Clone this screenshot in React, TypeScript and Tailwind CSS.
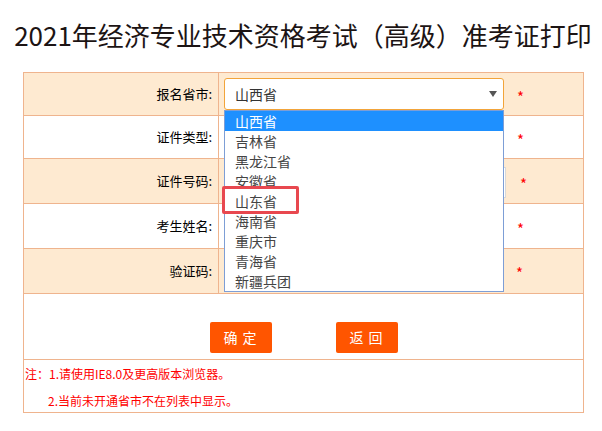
import * as React from "react";

const provinces = [
  "山西省",
  "吉林省",
  "黑龙江省",
  "安徽省",
  "山东省",
  "海南省",
  "重庆市",
  "青海省",
  "新疆兵团",
];

const font = { fontFamily: '"Noto Sans CJK SC", "Noto Sans", sans-serif' };

function Star({ className = "" }: { className?: string }) {
  return <span className={`text-[15px] text-[#ff0000] ${className}`}>*</span>;
}

function Row({
  label,
  shaded,
  height,
  children,
}: {
  label: string;
  shaded?: boolean;
  height: string;
  children?: React.ReactNode;
}) {
  return (
    <div
      className={`grid grid-cols-[195px_1fr] border-b border-[#efb48e] ${height} ${
        shaded ? "bg-[#feead1]" : "bg-white"
      }`}
    >
      <div className="flex items-center justify-end border-r border-[#efb48e] pr-[6px] text-[13px] text-black">
        {label}
      </div>
      <div className="flex items-center pl-[5px]">{children}</div>
    </div>
  );
}

export default function App() {
  return (
    <div className="h-[431px] w-[602px] bg-white" style={font}>
      {/* title */}
      <div className="flex h-[72px] items-center justify-center pb-[4px] pl-[4px] text-[26px] text-[#1c1414]">
        2021年经济专业技术资格考试（高级）准考证打印
      </div>

      <div className="ml-[23px] w-[561px] border border-[#efb48e]">
        {/* 报名省市 with open dropdown */}
        <div className="relative z-20">
          <Row label="报名省市:" shaded height="h-[43px]">
            <div className="relative h-[32px] w-[280px]">
              <div className="flex h-full items-center justify-between rounded-[3px] border border-[#f2a43a] bg-white pl-[10px] pr-[6px] text-[14px] text-[#333]">
                <span>山西省</span>
                <span className="h-0 w-0 border-x-[4px] border-t-[6px] border-x-transparent border-t-[#555]" />
              </div>
              <div className="absolute left-0 top-[32px] h-[182px] w-[280px] border border-[#7d9ed6] bg-white">
                {provinces.map((p, i) => (
                  <div
                    key={p}
                    className={`flex h-[20px] items-center pl-[10px] text-[14px] ${
                      i === 0 ? "bg-[#1e90ff] text-white" : "text-[#444]"
                    }`}
                  >
                    {p}
                  </div>
                ))}
                <div className="absolute left-[-3px] top-[75px] h-[28px] w-[77px] rounded-[2px] border-[3px] border-[#e8484f]" />
              </div>
            </div>
            <Star className="ml-[13px] mt-[6px]" />
          </Row>
        </div>

        <Row label="证件类型:" height="h-[43px]">
          <div className="h-[30px] w-[280px]" />
          <Star className="ml-[13px] mt-[6px]" />
        </Row>

        <Row label="证件号码:" shaded height="h-[45px]">
          <div className="mt-[3px] h-[31px] w-[282px] border border-[#d8d8d8] bg-white" />
          <Star className="ml-[14px] mt-[6px]" />
        </Row>

        <Row label="考生姓名:" height="h-[45px]">
          <div className="h-[30px] w-[280px]" />
          <Star className="ml-[13px] mt-[6px]" />
        </Row>

        <Row label="验证码:" shaded height="h-[45px]">
          <div className="h-[30px] w-[280px]" />
          <Star className="ml-[12px] mt-[4px]" />
        </Row>

        {/* buttons */}
        <div className="flex h-[66px] items-end justify-center gap-[64px] border-b border-[#efb48e] pb-[6px]">
          <button className="h-[31px] w-[62px] rounded-[2px] bg-[#ff5500] pl-[4px] text-[14px] tracking-[5px] text-white">
            确定
          </button>
          <button className="h-[31px] w-[62px] rounded-[2px] bg-[#ff5500] pl-[4px] text-[14px] tracking-[5px] text-white">
            返回
          </button>
        </div>

        {/* notes */}
        <div className="h-[52px] pl-[1px] text-[12px] leading-[27px] text-[#ff0000]">
          <div>注：1.请使用IE8.0及更高版本浏览器。</div>
          <div className="pl-[23px]">2.当前未开通省市不在列表中显示。</div>
        </div>
      </div>
    </div>
  );
}
